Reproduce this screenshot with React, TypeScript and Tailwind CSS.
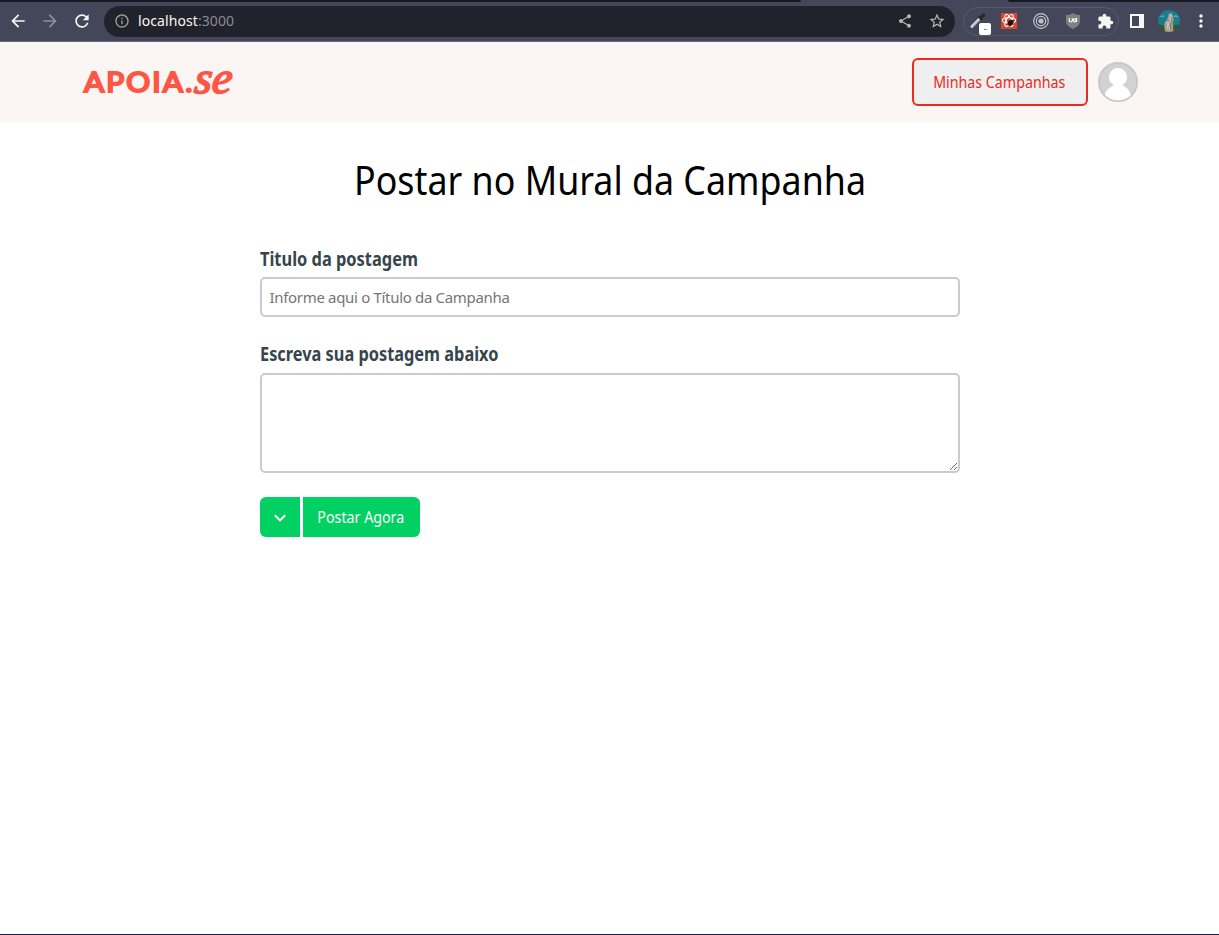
import React from 'react';
import {
  MdArrowBack,
  MdArrowForward,
  MdRefresh,
  MdInfoOutline,
  MdShare,
  MdStarOutline,
  MdExtension,
  MdMoreVert,
} from 'react-icons/md';

function Cell({ children }: { children: React.ReactNode }) {
  return <div className="flex h-8 w-8 shrink-0 items-center justify-center">{children}</div>;
}

function Eyedropper() {
  return (
    <div className="relative h-4 w-4">
      <svg width="18" height="18" viewBox="0 0 18 18" className="-ml-px">
        <path d="M2 13.5 10 5.5" stroke="#d9d9d9" strokeWidth="3" strokeLinecap="round" />
        <path d="M2.5 13.8 10.5 6.2" stroke="#8d8d8d" strokeWidth="1" />
        <path d="M8.5 3.5 12 7" stroke="#222" strokeWidth="2" />
        <path d="M11 4.5 13.5 2.2" stroke="#2b2b2b" strokeWidth="3.6" strokeLinecap="round" />
      </svg>
      <span className="absolute top-[10px] left-[8px] flex h-3 w-3 items-center justify-center rounded-[2px] bg-white">
        <span className="h-px w-[3px] bg-[#8087c8]" />
      </span>
    </div>
  );
}

function ReactBug() {
  return (
    <svg width="16" height="16" viewBox="0 0 16 16">
      <rect width="16" height="16" fill="#d9472f" />
      <g fill="none" stroke="#fff" strokeWidth="1.1">
        <ellipse cx="8" cy="7.5" rx="6.6" ry="2.7" />
        <ellipse cx="8" cy="7.5" rx="6.6" ry="2.7" transform="rotate(60 8 7.5)" />
        <ellipse cx="8" cy="7.5" rx="6.6" ry="2.7" transform="rotate(120 8 7.5)" />
      </g>
      <ellipse cx="9.5" cy="9.8" rx="2.4" ry="3.5" transform="rotate(50 9.5 9.8)" fill="#23100c" />
      <path d="M6.500 8 13 11.500M7 12l5-4M9 13.500l1-6" stroke="#23100c" strokeWidth=".8" />
    </svg>
  );
}

function Target() {
  return (
    <svg width="16" height="16" viewBox="0 0 16 16" fill="none" stroke="#c3c4c9" strokeWidth="1.2">
      <circle cx="8" cy="8" r="7.3" />
      <circle cx="8" cy="8" r="4.7" />
      <circle cx="8" cy="8" r="2" fill="#c3c4c9" />
    </svg>
  );
}

function Shield() {
  return (
    <svg width="16" height="16" viewBox="0 0 16 16">
      <path d="M8 0c2 1.5 4.200 2 7 2v6c0 4-3 6.300-7 8-4-1.700-7-4-7-8V2c2.800 0 5-.5 7-2Z" fill="#808080" />
      <g fill="none" stroke="#fff" strokeWidth="1.200">
        <path d="M4.300 5.200v2.300a1.500 1.500 0 0 0 3 0V5.200" />
        <circle cx="9.900" cy="7.300" r="1.500" />
        <path d="M11.500 4.800v4" />
      </g>
    </svg>
  );
}

function StatueAvatar() {
  return (
    <svg width="22" height="22" viewBox="0 0 22 22" className="rounded-full">
      <rect width="22" height="22" fill="#167e8c" />
      <path d="M1 7q3-3 6-1l-1 1zM15 6q4-2 6 1l-5 0z" fill="#56a8b4" />
      <path d="M0 15q5-1 8 3l6-1q4-4 8-1v6H0z" fill="#3c5426" />
      <path d="M10.500 4.500q2-2.500 4-.5l.3 2.500 1 3-1 4 .7 8.500H7l-.8-6 .6-4 2-1.500z" fill="#a89c91" />
      <path d="M11.500 5l2 1-2 3 3 1-4 3 1 7M8 12l2 2-1 5" stroke="#d5cbc2" strokeWidth="1" fill="none" />
      <path d="M13.500 8l.5 4-2 2 1 6" stroke="#6e625a" strokeWidth=".8" fill="none" />
    </svg>
  );
}

function BrowserBar() {
  return (
    <div className="flex h-[42px] shrink-0 flex-col border-b border-[#666778] bg-[#44475a]">
      <div className="flex h-[2px] justify-between">
        <div className="w-[801px] rounded-br-[2px] bg-[#191a21]" />
        <div className="w-[211px] rounded-bl-[2px] bg-[#191a21]" />
      </div>
      <div className="flex h-[38px] items-center pl-0.5">
        <Cell><MdArrowBack size={20} color="#f8f8f2" /></Cell>
        <Cell><MdArrowForward size={20} color="#8f9099" /></Cell>
        <Cell><MdRefresh size={20} color="#f8f8f2" /></Cell>
        <div className="ml-1.5 flex h-[31px] w-[851px] items-center rounded-full bg-[#21222c] pr-0.5 pl-2.5">
          <MdInfoOutline size={16} color="#a0a0a0" />
          <div className="ml-2 flex-1 font-['Noto_Sans',sans-serif] text-[14px] leading-5 tracking-[0.08px] text-[#f8f8f2]">
            localhost<span className="text-[#8b8c92]">:3000</span>
          </div>
          <Cell><MdShare size={16} color="#b5b5b2" /></Cell>
          <Cell><MdStarOutline size={18} color="#b9b9b6" /></Cell>
        </div>
        <div className="ml-2 flex h-[29px] w-[156px] items-center rounded-full border border-[#595b6d]">
          <div className="ml-px flex h-8 w-7 shrink-0 items-center justify-center"><Eyedropper /></div>
          <Cell><ReactBug /></Cell>
          <Cell><Target /></Cell>
          <Cell><Shield /></Cell>
          <Cell><MdExtension size={17} color="#f8f8f2" /></Cell>
        </div>
        <div className="flex pl-0.5">
          <Cell>
            <span className="h-[14px] w-[14px] border-2 border-r-[5px] border-[#f8f8f2]" />
          </Cell>
          <Cell><StatueAvatar /></Cell>
          <Cell><MdMoreVert size={20} color="#f8f8f2" /></Cell>
        </div>
      </div>
    </div>
  );
}

function Logo() {
  return (
    <div className="flex h-10 w-[152px] items-center whitespace-nowrap text-[#ff5544]">
      <span className="ml-0.5 w-[109px] origin-left scale-x-[1.1] font-['Lato',sans-serif] text-[27px] leading-10 font-normal tracking-[2px] [-webkit-text-stroke:2.1px_#ff5544] [stroke-linejoin:round]">
        APOIA.
      </span>
      <span className="-mt-[9px] ml-0.5 -skew-x-6 font-['Liberation_Serif',serif] text-[45px] leading-10 font-normal italic [-webkit-text-stroke:1.8px_#ff5544]">
        se
      </span>
    </div>
  );
}

function UserAvatar() {
  return (
    <svg width="40" height="40" viewBox="0 0 40 40" className="ml-2.5">
      <defs>
        <clipPath id="user-circle"><circle cx="20" cy="20" r="18.500" /></clipPath>
      </defs>
      <circle cx="20" cy="20" r="19" fill="#d2d2d2" stroke="#c8c8c8" strokeWidth="2" />
      <g fill="#fff" clipPath="url(#user-circle)">
        <path d="M11 15.500C11 10 15 6 20 6s9 4 9 9.500c0 3-1.500 5.500-4 7l.5 1.500c4 1.500 7 6 8 11v5H6v-5c1-5 4.500-9.500 9-11l.5-1.500c-3-1.500-4.500-4-4.500-7Z" />
      </g>
    </svg>
  );
}

export default function App() {
  return (
    <div className="flex h-[935px] w-[1219px] flex-col overflow-hidden border-b border-[#1d1c48] bg-white font-['Noto_Sans',sans-serif]">
      <BrowserBar />
      <header className="flex h-20 shrink-0 items-center justify-between bg-[#fbf5f3] pr-[81px] pl-[82px]">
        <Logo />
        <div className="flex items-center">
          <button className="flex h-12 w-44 items-center justify-center rounded-md border-2 border-[#ea2b1f] bg-[#efefef] pr-px text-[16px] whitespace-nowrap text-[#ea2b1f]">
            <span className="scale-x-[0.89]">Minhas Campanhas</span>
          </button>
          <UserAvatar />
        </div>
      </header>
      <main className="mx-auto w-[700px]">
        <h1 className="mt-[31px] scale-x-[0.895] text-center text-[40px] leading-[54px] whitespace-nowrap text-black">
          Postar no Mural da Campanha
        </h1>
        <form className="mt-[38px] flex flex-col items-start">
          <label className="h-8 origin-left scale-x-[0.863] text-[19px] leading-[28px] font-bold text-[#36454b]">
            Titulo da postagem
          </label>
          <input
            type="text"
            placeholder="Informe aqui o Título da Campanha"
            className="h-10 w-full rounded-[5px] border-2 border-[#cbcbcb] px-2 text-[15px] tracking-[-0.32px] outline-none placeholder:text-[#757575]"
          />
          <label className="mt-[23px] h-[33px] origin-left scale-x-[0.86] text-[19px] leading-[28px] font-bold text-[#36454b]">
            Escreva sua postagem abaixo
          </label>
          <textarea className="block h-[100px] w-full rounded-[5px] border-2 border-[#cbcbcb] p-2 outline-none" />
          <div className="mt-6 flex gap-[3px]">
            <button type="button" className="flex h-10 w-10 items-center justify-center rounded-l-md bg-[#00d162] pt-0.5">
              <svg width="12" height="8" viewBox="0 0 12 8" fill="none" stroke="#fff" strokeWidth="2">
                <path d="m.8 1.200 5.200 5.200 5.200-5.200" />
              </svg>
            </button>
            <button type="button" className="flex h-10 w-[117px] items-center justify-center rounded-r-md bg-[#00d162] text-[16px] whitespace-nowrap text-white">
              <span className="scale-x-[0.89]">Postar Agora</span>
            </button>
          </div>
        </form>
      </main>
    </div>
  );
}
